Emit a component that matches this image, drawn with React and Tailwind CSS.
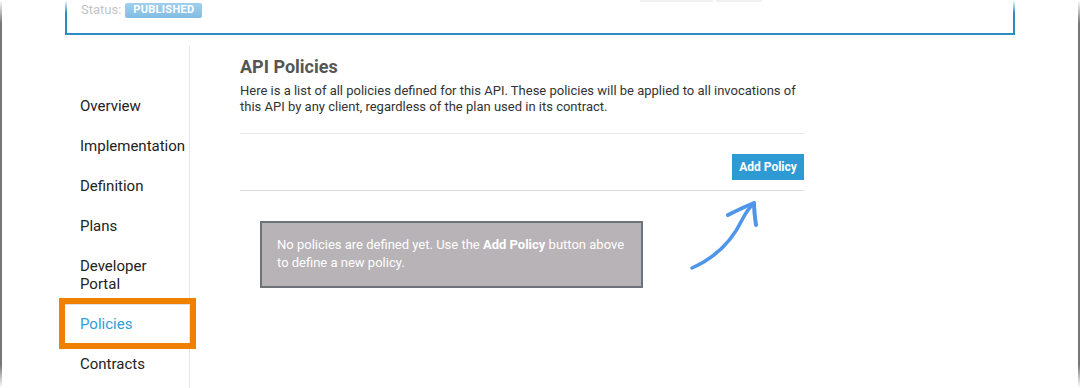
const navItems = ["Overview", "Implementation", "Definition", "Plans"];

const App = () => {
  return (
    <div
      className="relative flex h-[388px] w-[1080px] overflow-hidden bg-white text-[#222]"
      style={{ fontFamily: "Roboto, 'Liberation Sans', sans-serif" }}
    >
      {/* frame edge left */}
      <div className="w-[2px] shrink-0 bg-[linear-gradient(to_bottom,#fff,#777_6%,#777_94%,#fff)]" />

      <div className="flex min-w-0 flex-1 flex-col">
        {/* top card (cut off) */}
        <div className="ml-[63px] flex h-[35px] w-[950px] border-b-2 border-[#2f8cc3]">
          <div className="w-[2px] bg-[linear-gradient(to_bottom,#fff,#2f8cc3_40%)]" />
          <div className="relative flex flex-1 items-start gap-[4px] pl-[14px] pt-[2px]">
            <span className="text-[13px] leading-[15px] text-[#c4c4c4]">Status:</span>
            <span className="mt-[1px] flex h-[15px] items-center rounded-[2px] bg-[linear-gradient(to_bottom,#9fd0ee,#82bde3)] px-[8px] text-[11px] font-bold tracking-[0.3px] text-white">
              PUBLISHED
            </span>
            <div className="absolute left-[573px] top-0 h-[2px] w-[73px] bg-[#f1f1f1]" />
            <div className="absolute left-[649px] top-0 h-[2px] w-[46px] bg-[#f1f1f1]" />
          </div>
          <div className="w-[2px] bg-[linear-gradient(to_bottom,#fff,#2f8cc3_40%)]" />
        </div>

        <div className="flex flex-1">
          {/* sidebar */}
          <div className="ml-[63px] mt-[11px] w-[125px] border-r border-[#e6e6e6] pt-[40px]">
            {navItems.map((t) => (
              <div key={t} className="flex h-[40px] items-center pl-[15px] text-[15px]">
                {t}
              </div>
            ))}
            <div className="flex h-[58px] flex-col justify-center pl-[15px] text-[15px] leading-[18px]">
              <span>Developer</span>
              <span>Portal</span>
            </div>
            <div className="flex h-[40px] items-center border-y border-[#e0e0e0] pl-[15px] text-[15px] text-[#2b9fd8]">
              Policies
            </div>
            <div className="flex h-[40px] items-center pl-[15px] text-[15px]">Contracts</div>
          </div>

          {/* main */}
          <div className="ml-[50px] w-[564px] pt-[21px]">
            <h2 className="text-[18px] font-bold leading-[22px] text-[#555]">API Policies</h2>
            <p className="mt-[5px] text-[13px] leading-[16px] text-[#333]">
              Here is a list of all policies defined for this API. These policies will be applied to all invocations of
              this API by any client, regardless of the plan used in its contract.
            </p>
            <div className="mt-[18px] border-t border-[#e8e8e8]" />
            <div className="flex justify-end pt-[20px] pb-[10px]">
              <button className="flex h-[26px] w-[72px] items-center justify-center bg-[#2d9ad3] text-[12px] font-bold text-white">
                Add Policy
              </button>
            </div>
            <div className="border-t border-[#dcdcdc]" />
            <div className="ml-[20px] mt-[30px] w-[383px] border-2 border-[#6e737a] bg-[#b8b3b6] pl-[15px] pr-[10px] pb-[14px] pt-[13px] text-[13px] leading-[18px] text-white">
              No policies are defined yet. Use the <b>Add Policy</b> button above to define a new policy.
            </div>
          </div>
        </div>
      </div>

      {/* frame edge right */}
      <div className="w-[2px] shrink-0 bg-[linear-gradient(to_bottom,#fff,#777_6%,#777_94%,#fff)]" />

      {/* annotation: highlight box */}
      <div className="absolute left-[59px] top-[298px] h-[51px] w-[137px] border-[6px] border-[#ef8000]" />

      {/* annotation: arrow */}
      <svg className="absolute left-[680px] top-[190px]" width="100" height="90" viewBox="0 0 100 90">
        <path
          d="M12 78 C 30 70, 50 55, 62 30 C 66 22, 70 17, 74 13"
          fill="none"
          stroke="#4f95ea"
          strokeWidth="3.5"
          strokeLinecap="round"
        />
        <path
          d="M48 25 C 58 20, 66 16, 74 13 C 74 20, 75 28, 76 35"
          fill="none"
          stroke="#4f95ea"
          strokeWidth="4"
          strokeLinecap="round"
          strokeLinejoin="round"
        />
      </svg>
    </div>
  );
};

export default App;
